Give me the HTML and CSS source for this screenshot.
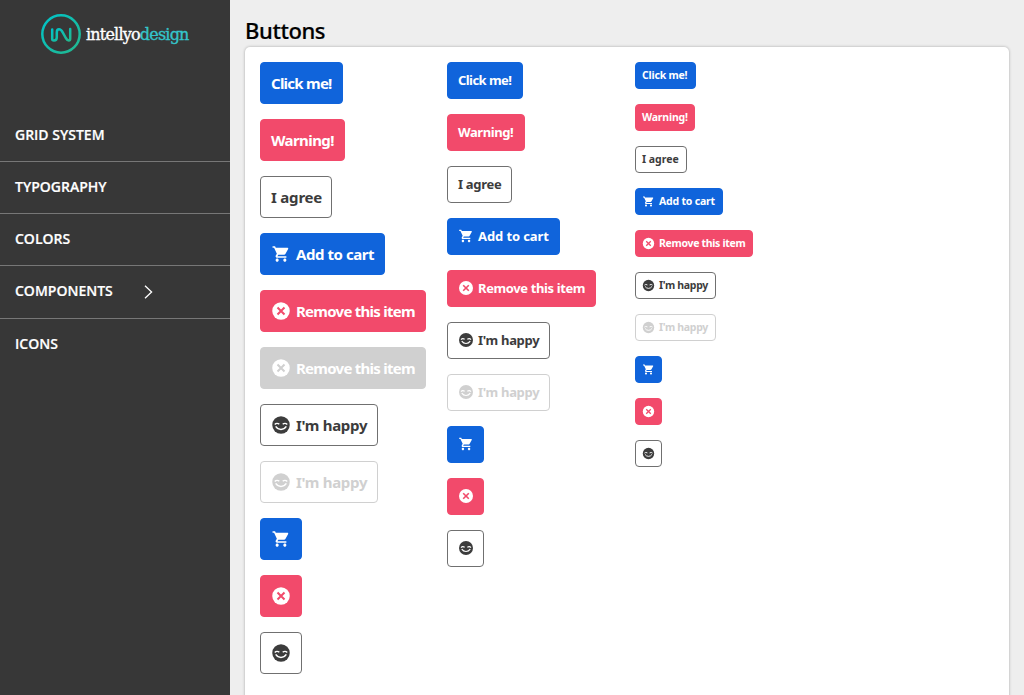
FILE: index.html
```html
<!DOCTYPE html>
<html lang="en">
<head>
<meta charset="utf-8">
<title>Buttons</title>
<link rel="stylesheet" href="styles.css">
</head>
<body>
<svg class="sprite" aria-hidden="true">
  <symbol id="cart" viewBox="-1 -1 26 26"><path d="M7 18c-1.100 0-2 .9-2 2s.9 2 2 2 2-.9 2-2-.9-2-2-2zM1 2v2h2l3.600 7.600L5.200 14c-.8 1.400.2 3 1.800 3h12v-2H7.400l1.100-2h7.500c.7 0 1.400-.4 1.700-1l3.600-6.500C21.700 4.800 21.200 4 20.500 4H5.200l-.9-2zM17 18c-1.100 0-2 .9-2 2s.9 2 2 2 2-.9 2-2-.9-2-2-2z"/></symbol>
  <symbol id="cancel" viewBox="0 0 24 24"><circle cx="12" cy="12" r="10.500"/><path class="cross" d="M7.800 7.800L16.200 16.200M16.200 7.800L7.800 16.200"/></symbol>
  <symbol id="smile" viewBox="0 0 24 24"><circle cx="12" cy="12" r="10.500"/><path class="face" d="M4.500 11.300Q6.800 9 10 10.900M14 10.900Q17.200 9 19.500 11.300M5.600 13.700Q8 17.300 12 17.300T18.400 13.700"/></symbol>
</svg>
<div class="layout">
  <aside class="sidebar">
    <div class="brand">
      <svg class="brand-mark" viewBox="0 0 40 40">
        <defs><linearGradient id="teal" x1="0" y1="0" x2="1" y2="1"><stop offset="0" stop-color="#00c4ca"/><stop offset="1" stop-color="#23b78d"/></linearGradient></defs>
        <circle cx="20" cy="20" r="18.700"/>
        <path d="M11.200 15.500V25Q11.200 26.500 13 26.500Q15.800 26.500 15.800 23.500V18.500Q15.800 15.300 18 15.300Q20 15.300 21.700 18.300L24.800 24Q26.300 26.500 27.800 26.500Q29.200 26.500 29.200 24.500V15"/>
      </svg>
      <span class="brand-name">intellyo<span>design</span></span>
    </div>
    <nav class="menu">
      <a class="n1">GRID SYSTEM</a>
      <a class="n2">TYPOGRAPHY</a>
      <a class="n3">COLORS</a>
      <a class="n4 tall">COMPONENTS<svg class="chevron" viewBox="0 0 9 14"><path d="M1 .7L7.600 7L1 13.300"/></svg></a>
      <a class="n5">ICONS</a>
    </nav>
  </aside>
  <main class="content">
    <h1>Buttons</h1>
    <section class="panel">
      <div class="column large">
        <button class="btn primary click"><span>Click me!</span></button>
        <button class="btn danger warn"><span>Warning!</span></button>
        <button class="btn outline agree"><span>I agree</span></button>
        <button class="btn primary add"><svg><use href="#cart"/></svg><span>Add to cart</span></button>
        <button class="btn danger remove"><svg><use href="#cancel"/></svg><span>Remove this item</span></button>
        <button class="btn filled-off remove"><svg><use href="#cancel"/></svg><span>Remove this item</span></button>
        <button class="btn outline happy"><svg><use href="#smile"/></svg><span>I'm happy</span></button>
        <button class="btn outline off happy"><svg><use href="#smile"/></svg><span>I'm happy</span></button>
        <button class="btn primary icon"><svg><use href="#cart"/></svg></button>
        <button class="btn danger icon"><svg><use href="#cancel"/></svg></button>
        <button class="btn outline icon"><svg><use href="#smile"/></svg></button>
      </div>
      <div class="column medium">
        <button class="btn primary click"><span>Click me!</span></button>
        <button class="btn danger warn"><span>Warning!</span></button>
        <button class="btn outline agree"><span>I agree</span></button>
        <button class="btn primary add"><svg><use href="#cart"/></svg><span>Add to cart</span></button>
        <button class="btn danger remove"><svg><use href="#cancel"/></svg><span>Remove this item</span></button>
        <button class="btn outline happy"><svg><use href="#smile"/></svg><span>I'm happy</span></button>
        <button class="btn outline off happy"><svg><use href="#smile"/></svg><span>I'm happy</span></button>
        <button class="btn primary icon"><svg><use href="#cart"/></svg></button>
        <button class="btn danger icon"><svg><use href="#cancel"/></svg></button>
        <button class="btn outline icon"><svg><use href="#smile"/></svg></button>
      </div>
      <div class="column small">
        <button class="btn primary click"><span>Click me!</span></button>
        <button class="btn danger warn"><span>Warning!</span></button>
        <button class="btn outline agree"><span>I agree</span></button>
        <button class="btn primary add"><svg><use href="#cart"/></svg><span>Add to cart</span></button>
        <button class="btn danger remove"><svg><use href="#cancel"/></svg><span>Remove this item</span></button>
        <button class="btn outline happy"><svg><use href="#smile"/></svg><span>I'm happy</span></button>
        <button class="btn outline off happy"><svg><use href="#smile"/></svg><span>I'm happy</span></button>
        <button class="btn primary icon"><svg><use href="#cart"/></svg></button>
        <button class="btn danger icon"><svg><use href="#cancel"/></svg></button>
        <button class="btn outline icon"><svg><use href="#smile"/></svg></button>
      </div>
    </section>
  </main>
</div>
</body>
</html>
```
FILE: styles.css
```css
* { box-sizing: border-box; }
body { margin: 0; background: #eee; font-family: "Open Sans", sans-serif; }
.sprite { display: none; }
.layout { display: flex; height: 695px; overflow: hidden; }
.sidebar { width: 230px; flex: none; background: #373737; color: #fff; }
.brand { display: flex; height: 109px; padding: 14px 0 0 41px; }
.brand-mark { width: 40px; height: 40px; fill: none; stroke: url(#teal); stroke-width: 2.500; stroke-linecap: round; }
.brand-name { margin: 10px 0 0 5px; font: 16px/22px "DejaVu Serif", serif; letter-spacing: -.8px; white-space: nowrap; height: 22px; -webkit-text-stroke: .35px; }
.brand-name span { color: #34c5cb; }
.menu a { display: flex; align-items: center; height: 52px; padding: 0 15px 2px; border-bottom: 1px solid #777; font-size: 14px; font-weight: 600; -webkit-text-stroke: .2px; }
.menu .n1 { height: 53px; }
.menu .tall { height: 53px; padding-bottom: 3px; }
.menu .n5 { border: 0; padding-bottom: 3px; }
.chevron { width: 9px; height: 14px; margin: 2px 0 0 31px; fill: none; stroke: #fff; stroke-width: 1.300; }
.content { flex: 1; padding: 15px 15px 0; }
h1 { margin: 0; height: 32px; font: 500 22px/30px "Noto Sans", sans-serif; letter-spacing: -.4px; color: #000; -webkit-text-stroke: .2px; }
.panel { display: grid; grid-template-columns: 187px 188px 1fr; height: 680px; padding: 15px; background: #fff; border-radius: 5px; box-shadow: 0 0 3px rgba(0,0,0,.3); }
.column { display: flex; flex-direction: column; align-items: flex-start; gap: 15px; }
.btn { display: flex; align-items: center; flex: none; margin: 0; border: 1px solid transparent; border-radius: 4px; font-family: "Noto Sans", sans-serif; font-weight: 700; color: #fff; white-space: nowrap; }
.btn svg { flex: none; fill: currentColor; }
.btn span { margin-top: -2px; }
.face { fill: none; stroke: #fff; stroke-width: 1.700; }
.cross { fill: none; stroke: var(--cross); stroke-width: 2.400; }
.primary { background: #1064db; border-color: #1064db; }
.danger { --cross: #f24a6b; background: #f24a6b; border-color: #f24a6b; }
.outline { background: #fff; border-color: #707070; color: #3c3c3c; }
.filled-off { --cross: #d0d0d0; background: #d0d0d0; border-color: #d0d0d0; }
.off { color: #d0d0d0; border-color: #d0d0d0; }
.large .btn { height: 42px; padding: 1px 10px 0; font-size: 15px; letter-spacing: -.2px; }
.large svg { width: 20px; height: 20px; margin: -2px 5px 0 0; }
.large .click { width: 83px; letter-spacing: -.75px; }
.large .warn { width: 85px; letter-spacing: -.6px; }
.large .agree { width: 72px; }
.large .add { width: 125px; letter-spacing: -.45px; }
.large .remove { width: 166px; letter-spacing: -.73px; }
.large .happy { width: 118px; letter-spacing: -.3px; }
.large .icon { width: 42px; }
.medium .btn { height: 37px; padding: 0 10px; font-size: 13px; }
.medium svg { width: 16px; height: 16px; margin: -1px 4px 0 0; }
.medium .click { width: 76px; letter-spacing: -.55px; }
.medium .warn { width: 78px; letter-spacing: -.4px; }
.medium .agree { width: 65px; letter-spacing: -.3px; }
.medium .add { width: 113px; letter-spacing: -.1px; }
.medium .remove { width: 149px; letter-spacing: -.38px; }
.medium .happy { width: 103px; letter-spacing: -.3px; }
.medium .icon { width: 37px; }
.small .btn { height: 27px; padding: 0 6px; font-size: 10.500px; letter-spacing: -.2px; }
.small svg { width: 13px; height: 13px; margin: -1px 4px 0 0; }
.small .click { width: 61px; }
.small .warn { width: 60px; }
.small .agree { width: 52px; letter-spacing: 0; }
.small .add { width: 88px; }
.small .remove { width: 118px; letter-spacing: -.32px; }
.small .happy { width: 81px; letter-spacing: -.3px; }
.small .icon { width: 27px; }
```
